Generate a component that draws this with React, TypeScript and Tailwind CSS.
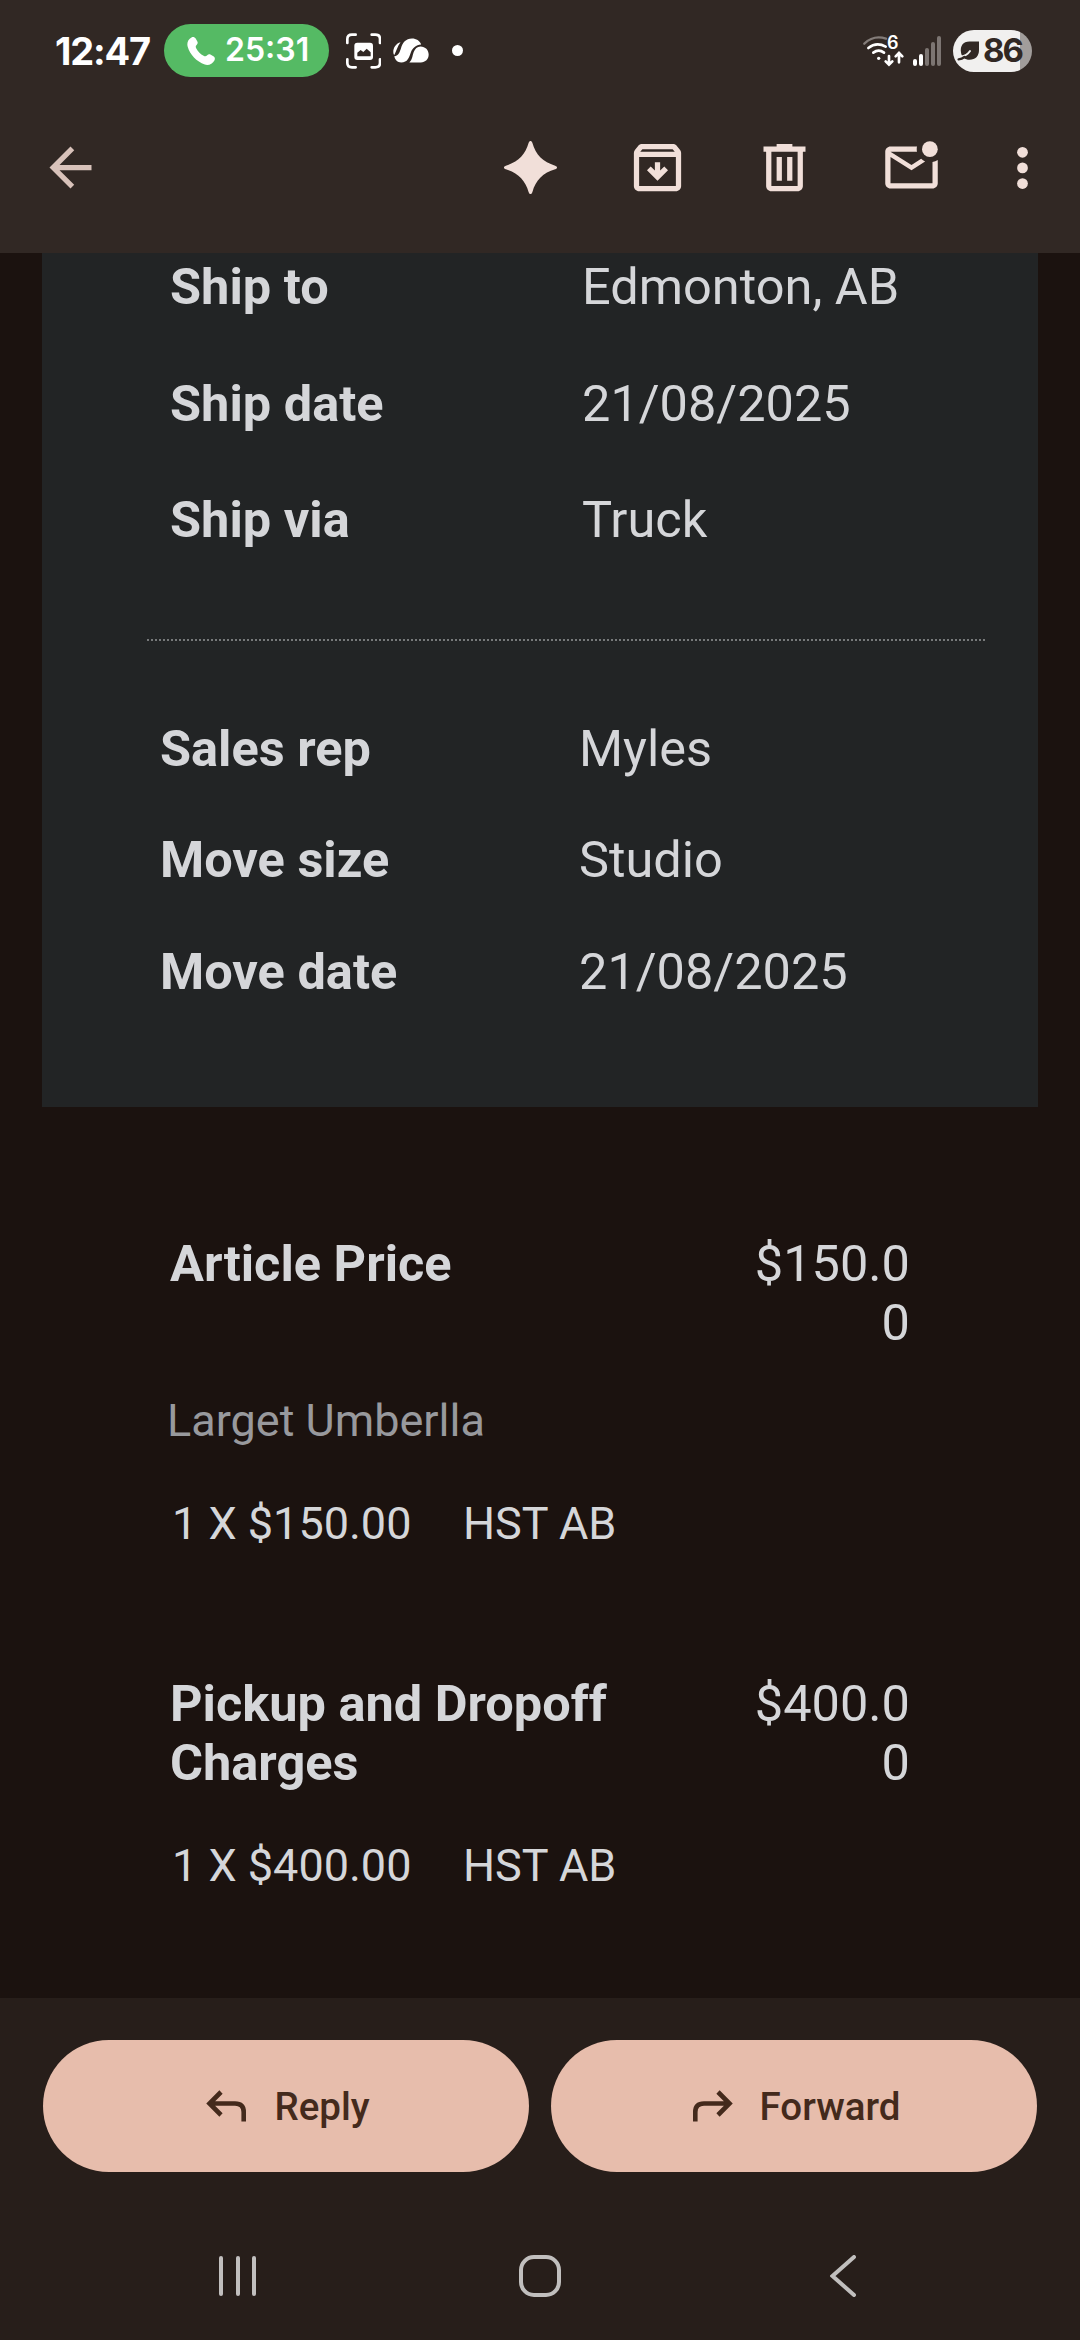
import React from "react";

const shipping = [
	{ label: "Ship to", value: "Edmonton, AB" },
	{ label: "Ship date", value: "21/08/2025" },
	{ label: "Ship via", value: "Truck" },
];

const move = [
	{ label: "Sales rep", value: "Myles" },
	{ label: "Move size", value: "Studio" },
	{ label: "Move date", value: "21/08/2025" },
];

const ScanIcon = () => (
	<svg className="ml-[17px] h-9 w-[35px]" viewBox="32 40 105 108" fill="none">
		<g stroke="#fff" strokeWidth="8" strokeLinecap="round">
			<path d="M36 70V58Q36 45 50 45H61" />
			<path d="M109 45H120Q134 45 134 58V70" />
			<path d="M36 119V130Q36 143 50 143H61" />
			<path d="M109 143H120Q134 143 134 130V119" />
		</g>
		<rect x="57" y="69" width="56" height="52" rx="9" fill="#fff" />
		<path d="M66 110V99L76 91L84 97L94 87L106 98V110Z" fill="#312824" />
	</svg>
);

const CloudIcon = () => (
	<svg className="ml-3 h-[25px] w-9" viewBox="171 55 110 75" fill="#fff">
		<path d="M194 67C181 70 171 84 172 97C172 102 173 104 175 106C181 95 184 80 194 67Z" />
		<path d="M175 110C189 108 191 98 195 87C200 69 210 56 229 56C242 56 253 63 257 74C241 76 231 84 226 97C220 114 216 129 196 129C185 129 177 121 175 110Z" />
		<path d="M221 129C230 121 230 110 234 98C238 87 245 80 255 80C270 80 280 91 280 105C280 119 270 129 256 129Z" />
	</svg>
);

const WifiIcon = () => (
	<div className="relative">
		<svg className="h-[32px] w-[42px]" viewBox="23 45 126 96" fill="none" strokeLinecap="round">
			<path d="M27 71Q55 44 92 56" stroke="#837c79" strokeWidth="7" />
			<path d="M39 84Q63 65 91 80" stroke="#fff" strokeWidth="8" />
			<path d="M54 98Q70 86 86 98" stroke="#fff" strokeWidth="8" />
			<circle cx="70" cy="115" r="5" fill="#fff" />
			<g stroke="#fff" strokeWidth="8">
				<path d="M101 108V132M91 124L101 134L111 124" />
				<path d="M131 127V102M121 109L131 99L141 109" />
			</g>
		</svg>
		<span className="absolute -top-px left-[24px] text-[18px] leading-none">6</span>
	</div>
);

const StatusBar = () => (
	<div className="flex h-[101px] items-center pl-[55px] font-['Inter',sans-serif] font-semibold text-white">
		<div className="w-[109px] pt-0.5 text-[38px] font-bold tracking-[-1.2px]">12:47</div>
		<div className="flex h-[53px] w-[165px] items-center rounded-full bg-[#55ba64] pl-[23px]">
			<svg className="h-[28px] w-[28px]" viewBox="0 0 28 28" fill="#fff">
				<path d="M4.5 0.5C6 -0.4 7.8 0.2 8.7 1.6L10.2 4.2C11 5.6 10.8 6.7 9.8 7.7C8.4 9 8.5 10 9.3 11.4C11 14.5 13.5 17 16.6 18.8C18 19.6 19 19.6 20.2 18.3C21.2 17.2 22.4 17 23.8 17.8L26.4 19.3C27.9 20.2 28.3 21.8 27.4 23.4C25.6 26.8 21.6 28.8 17.8 27.5C9.5 24.7 3 17.6 0.7 9.8C-0.4 6 1.1 2.3 4.5 0.5Z" />
			</svg>
			<span className="-mt-0.5 ml-[10px] text-[32px]">25:31</span>
		</div>
		<ScanIcon />
		<CloudIcon />
		<div className="ml-[23px] h-[11px] w-[11px] rounded-full bg-white" />
		<div className="ml-[400px]">
			<WifiIcon />
		</div>
		<div className="ml-2 flex h-[30px] w-[28px] items-end justify-between">
			<div className="h-[7px] w-1 rounded-full bg-white" />
			<div className="h-[12px] w-1 rounded-full bg-white" />
			<div className="h-[18px] w-1 rounded-full bg-[#7c7572]" />
			<div className="h-[24px] w-1 rounded-full bg-[#7c7572]" />
			<div className="h-[30px] w-1 rounded-full bg-[#7c7572]" />
		</div>
		<div className="ml-3 flex h-[42px] w-[79px] items-center rounded-full bg-linear-to-r from-[#f1f0ef] from-85% to-[#a19d9b] to-85% pl-1 text-[#312824]">
			<svg className="h-[20px] w-[23px] shrink-0" viewBox="0 0 23 20">
				<path d="M22 0.5H12.5C6 0.5 3 5 4 11.5C4.5 16 8 18.8 12.5 18.8C18.5 18.8 22 15 22 9Z" fill="#312824" />
				<path d="M4 15.8Q10 14.5 13 10" stroke="#f1f0ef" strokeWidth="2" fill="none" strokeLinecap="round" />
				<path d="M1.6 18.4Q5 18 7.5 16" stroke="#312824" strokeWidth="2.4" fill="none" strokeLinecap="round" />
			</svg>
			<span className="ml-[3px] text-[33px] font-bold tracking-[-2px]">86</span>
		</div>
	</div>
);

const Toolbar = () => (
	<div className="flex h-[135px] items-center pb-0.5 pl-[39px] text-[#f1dfd9]">
		<svg className="h-[63px] w-[63px]" viewBox="0 0 24 24" fill="#d8c2ba">
			<path d="M20 11H7.83l5.59-5.59L12 4l-8 8 8 8 1.41-1.41L7.83 13H20v-2z" />
		</svg>
		<div className="ml-auto flex gap-16 pr-[26px]">
			<svg className="h-[63px] w-[63px]" viewBox="0 0 24 24" fill="currentColor">
				<path d="M12 1.9C12.3 1.9 12.5 2.1 12.7 2.6C14 7.2 16.8 10 21.4 11.3C21.9 11.5 22.1 11.7 22.1 12C22.1 12.3 21.9 12.5 21.4 12.7C16.8 14 14 16.8 12.7 21.4C12.5 21.9 12.3 22.1 12 22.1C11.7 22.1 11.5 21.9 11.3 21.4C10 16.8 7.2 14 2.6 12.7C2.1 12.5 1.9 12.3 1.9 12C1.9 11.7 2.1 11.5 2.6 11.3C7.2 10 10 7.2 11.3 2.6C11.5 2.1 11.7 1.9 12 1.9Z" />
			</svg>
			<svg className="h-[63px] w-[63px]" viewBox="0 0 24 24" fill="currentColor">
				<path d="M20.54 5.23l-1.39-1.68C18.88 3.21 18.47 3 18 3H6c-.47 0-.88.21-1.16.55L3.46 5.23C3.17 5.57 3 6.02 3 6.5V19c0 1.1.9 2 2 2h14c1.1 0 2-.9 2-2V6.5c0-.48-.17-.93-.46-1.27zM6.24 5h11.52l.83 1H5.42l.82-1zM5 19V8h14v11H5zm8-9v3.17l1.59-1.58L16 13l-4 4-4-4 1.41-1.41L11 13.17V10h2z" />
			</svg>
			<svg className="h-[63px] w-[63px]" viewBox="0 0 24 24" fill="currentColor">
				<path d="M15 4V3H9v1H4v2h1v13c0 1.1.9 2 2 2h10c1.1 0 2-.9 2-2V6h1V4h-5zm2 15H7V6h10v13zM9 8h2v9H9zm4 0h2v9h-2z" />
			</svg>
			<svg className="h-[63px] w-[63px]" viewBox="0 0 24 24" fill="currentColor">
				<path d="M22 9.1v8.9c0 1.1-.9 2-2 2H4c-1.1 0-2-.9-2-2V6c0-1.1.9-2 2-2h10.1c-.1.32-.1.66-.1 1s0 .68.1 1H4l8 5 3.67-2.3c.44.42.95.77 1.52 1L12 13 4 8v10h16V9.9c.74-.15 1.42-.47 2-.8z" />
				<circle cx="19" cy="5" r="3" />
			</svg>
			<svg className="-ml-[16px] h-[63px] w-[63px]" viewBox="0 0 24 24" fill="currentColor">
				<circle cx="12" cy="6.2" r="2.05" />
				<circle cx="12" cy="12.15" r="2.05" />
				<circle cx="12" cy="18.1" r="2.05" />
			</svg>
		</div>
	</div>
);

const Quantity = ({ text, tax }: { text: string; tax: string }) => (
	<div className="flex text-[45px] leading-[53px]">
		<div className="w-[293px] pl-0.5">{text}</div>
		<div>{tax}</div>
	</div>
);

const BottomButton = ({ label, children }: { label: string; children: React.ReactNode }) => (
	<button className="flex h-[132px] flex-1 items-center justify-center gap-[27px] rounded-full bg-[#e7bdac] pl-1 text-[38.5px] font-medium text-[#442a1c]">
		{children}
		<span className="pt-px">{label}</span>
	</button>
);

export default function App() {
	return (
		<div className="flex h-[2340px] w-[1080px] flex-col overflow-hidden bg-[#1b120f] font-['Roboto',sans-serif] text-[#d5d6d9]">
			<header className="h-[253px] shrink-0 bg-[#312824]">
				<StatusBar />
				<Toolbar />
			</header>

			<main className="h-[1745px] shrink-0 text-[50.5px] leading-[59px]">
				<section className="mx-[42px] h-[854px] bg-[#222425] pt-1">
					<div className="h-[382px] pl-[128px]">
						{shipping.map((row) => (
							<div key={row.label} className="flex h-[116.5px]">
								<div className="w-[412px] font-bold">{row.label}</div>
								<div>{row.value}</div>
							</div>
						))}
					</div>
					<div className="ml-[105px] h-[2px] w-[839px] bg-[repeating-linear-gradient(90deg,#77797a_0_2px,transparent_2px_4px)]" />
					<div className="pt-[78px] pl-[118px]">
						{move.map((row) => (
							<div key={row.label} className="flex h-[111.3px]">
								<div className="w-[419px] font-bold">{row.label}</div>
								<div>{row.value}</div>
							</div>
						))}
					</div>
				</section>

				<section className="px-[170px] pt-[127px]">
					<div className="flex justify-between">
						<div className="w-[480px] font-bold">Article Price</div>
						<div className="w-[160px] text-right break-all">$150.00</div>
					</div>
					<div className="mt-[42px] -ml-[3px] text-[45px] leading-[53px] text-[#98999d]">Larget Umberlla</div>
					<div className="mt-[50px]">
						<Quantity text="1 X $150.00" tax="HST AB" />
					</div>
				</section>

				<section className="px-[170px] pt-[124px]">
					<div className="flex justify-between">
						<div className="w-[480px] font-bold">Pickup and Dropoff Charges</div>
						<div className="w-[160px] text-right break-all">$400.00</div>
					</div>
					<div className="mt-[47px]">
						<Quantity text="1 X $400.00" tax="HST AB" />
					</div>
				</section>
			</main>

			<footer className="flex-1 bg-[#271e1a]">
				<div className="flex gap-[22px] px-[43px] pt-[42px]">
					<BottomButton label="Reply">
						<svg className="h-[32px] w-[41px]" viewBox="0 0 41 32" fill="none" stroke="currentColor" strokeWidth="4.6">
							<path d="M15 2L3.5 13.5L15 25M4 13.5H29Q37.7 13.5 37.7 22V31.5" />
						</svg>
					</BottomButton>
					<BottomButton label="Forward">
						<svg className="h-[32px] w-[41px]" viewBox="0 0 41 32" fill="none" stroke="currentColor" strokeWidth="4.6">
							<path d="M26 2L37.5 13.5L26 25M37 13.5H12Q3.3 13.5 3.3 22V31.5" />
						</svg>
					</BottomButton>
				</div>
				<nav className="mt-[83px] flex h-[42px] items-center pl-[219px]">
					<div className="flex gap-[12.5px]">
						<div className="h-[40px] w-1 rounded-full bg-[#c1bfbe]" />
						<div className="h-[40px] w-1 rounded-full bg-[#c1bfbe]" />
						<div className="h-[40px] w-1 rounded-full bg-[#c1bfbe]" />
					</div>
					<div className="ml-[263px] h-[42px] w-[42px] rounded-[15px] border-4 border-[#c1bfbe]" />
					<svg className="ml-[269px] h-[42px] w-[26px]" viewBox="0 0 26 42" fill="none" stroke="#c1bfbe" strokeWidth="4" strokeLinecap="round">
						<path d="M24 2L2.5 21L24 40" />
					</svg>
				</nav>
			</footer>
		</div>
	);
}
